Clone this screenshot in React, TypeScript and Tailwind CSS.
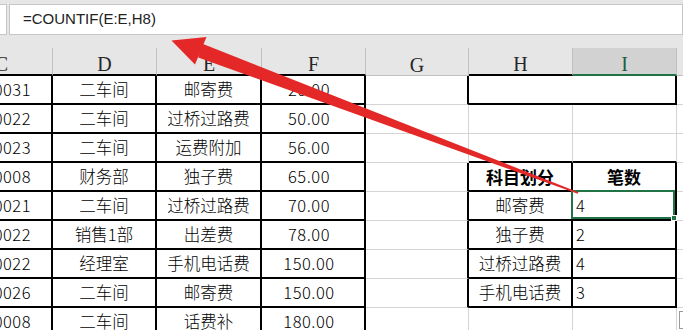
import React from 'react';

const rows: string[][] = [
  ['0031', '二车间', '邮寄费', '20.00'],
  ['0022', '二车间', '过桥过路费', '50.00'],
  ['0023', '二车间', '运费附加', '56.00'],
  ['0008', '财务部', '独子费', '65.00'],
  ['0021', '二车间', '过桥过路费', '70.00'],
  ['0022', '销售1部', '出差费', '78.00'],
  ['0022', '经理室', '手机电话费', '150.00'],
  ['0026', '二车间', '邮寄费', '150.00'],
  ['0008', '二车间', '话费补', '180.00'],
];

const summary: Record<number, [string, string]> = {
  3: ['科目划分', '笔数'],
  4: ['邮寄费', '4'],
  5: ['独子费', '2'],
  6: ['过桥过路费', '4'],
  7: ['手机电话费', '3'],
};

const cjk = "font-['Noto_Sans_CJK_SC',sans-serif] text-[16.5px] font-light";
const num = "font-['Noto_Sans_CJK_SC',sans-serif] text-[16.5px] font-light tabular-nums tracking-[0.5px]";
const blackBox = 'border-r-2 border-r-black border-b-2 border-b-black';

const Row: React.FC<{ d: string[]; r: number }> = ({ d, r }) => {
  const inTable = r >= 3 && r <= 7;
  const gRight = r === 0 || inTable ? 'border-r-2 border-r-black' : 'border-r border-r-[#d4d4d4]';
  const hiBottom = r === 2 ? 'border-b-2 border-b-black' : 'border-b border-b-[#d4d4d4]';
  const s = summary[r];

  return (
    <div className="flex h-[29px] text-black">
      <div className={`w-[53px] shrink-0 flex items-center justify-end pr-[20px] whitespace-nowrap overflow-hidden ${num} ${blackBox}`}>{d[0]}</div>
      <div className={`w-[104px] shrink-0 flex items-center justify-center ${cjk} ${blackBox}`}>{d[1]}</div>
      <div className={`w-[105px] shrink-0 flex items-center justify-center ${cjk} ${blackBox}`}>{d[2]}</div>
      <div className={`w-[104px] shrink-0 flex items-center justify-center pr-[8px] ${num} ${blackBox}`}>{d[3]}</div>
      <div className={`w-[103px] shrink-0 border-b border-b-[#d4d4d4] ${gRight}`} />
      {r === 0 ? (
        <div className={`w-[208px] shrink-0 ${blackBox}`} />
      ) : inTable ? (
        <>
          <div className={`w-[104px] shrink-0 flex items-center justify-center ${r === 3 ? "font-['Noto_Sans_CJK_SC',sans-serif] font-bold text-[17px]" : cjk} ${blackBox}`}>{s[0]}</div>
          <div className={`relative w-[104px] shrink-0 flex items-center ${blackBox} ${r === 3 ? "justify-center font-['Noto_Sans_CJK_SC',sans-serif] font-bold text-[17px]" : `pl-[3px] ${num}`}`}>
            {s[1]}
            {r === 4 && (
              <div className="absolute -left-[2px] -top-[2px] right-0 bottom-0 border-2 border-[#217346]">
                <div className="absolute -right-[4px] -bottom-[4px] w-[6px] h-[6px] bg-[#217346] border border-white" />
              </div>
            )}
          </div>
        </>
      ) : (
        <>
          <div className={`w-[104px] shrink-0 border-r border-r-[#d4d4d4] ${hiBottom}`} />
          <div className={`w-[104px] shrink-0 border-r border-r-[#d4d4d4] ${hiBottom}`} />
        </>
      )}
      <div className="flex-1 border-b border-b-[#d4d4d4]" />
    </div>
  );
};

const App: React.FC = () => {
  return (
    <div className="relative w-[683px] h-[330px] overflow-hidden bg-white">
      {/* formula bar */}
      <div className="h-[48px] bg-[#e6e6e6] pt-[4px]">
        <div className="flex h-[31px] gap-[2px]">
          <div className="w-[7px] bg-white border-y border-r border-[#c6c6c6]" />
          <div className="flex-1 flex items-center pl-[13px] bg-white border border-[#c6c6c6] font-['Liberation_Sans',sans-serif] text-[15px] text-[#222]">
            =COUNTIF(E:E,H8)
          </div>
        </div>
      </div>

      {/* column headers */}
      <div className="flex h-[28px] bg-[#e6e6e6] font-['Liberation_Serif',serif] text-[20px] text-[#262626]">
        <div className="w-[53px] shrink-0 flex items-center justify-end pt-[6px] pr-[44px] border-r border-r-[#c0c0c0] border-b-2 border-b-black">C</div>
        <div className="w-[104px] shrink-0 flex items-center justify-center pt-[6px] border-r border-r-[#c0c0c0] border-b-2 border-b-black">D</div>
        <div className="w-[105px] shrink-0 flex items-center justify-center pt-[6px] border-r border-r-[#c0c0c0] border-b-2 border-b-black">E</div>
        <div className="w-[104px] shrink-0 flex items-center justify-center pt-[6px] border-r border-r-[#c0c0c0] border-b-2 border-b-black">F</div>
        <div className="w-[103px] shrink-0 flex items-center justify-center pt-[6px] border-r border-r-[#c0c0c0] border-b border-b-[#c0c0c0]">G</div>
        <div className="w-[104px] shrink-0 flex items-center justify-center pt-[6px] border-r border-r-[#c0c0c0] border-b-2 border-b-black">H</div>
        <div className="w-[104px] shrink-0 flex items-center justify-center pt-[6px] bg-[#d2d2d2] text-[#1f5e3c] border-r border-r-[#c0c0c0] border-b-2 border-b-[#217346]">I</div>
        <div className="flex-1 border-b border-b-[#c0c0c0]" />
      </div>

      {rows.map((d, r) => (
        <Row key={r} d={d} r={r} />
      ))}

      {/* quick analysis button, partly visible */}
      <div className="absolute left-[679px] top-[311px] w-[10px] h-[18px] bg-white border border-[#9a9a9a]" />

      {/* red annotation arrow */}
      <svg className="absolute left-0 top-0 pointer-events-none" width="683" height="330" viewBox="0 0 683 330">
        <polygon points="201.8,43.6 578.3,192.3 577.7,193.7 198.2,57.4" fill="#e42828" />
        <polygon points="171.5,40.5 206.5,37 195,64.5" fill="#e42828" />
      </svg>
    </div>
  );
};

export default App;
